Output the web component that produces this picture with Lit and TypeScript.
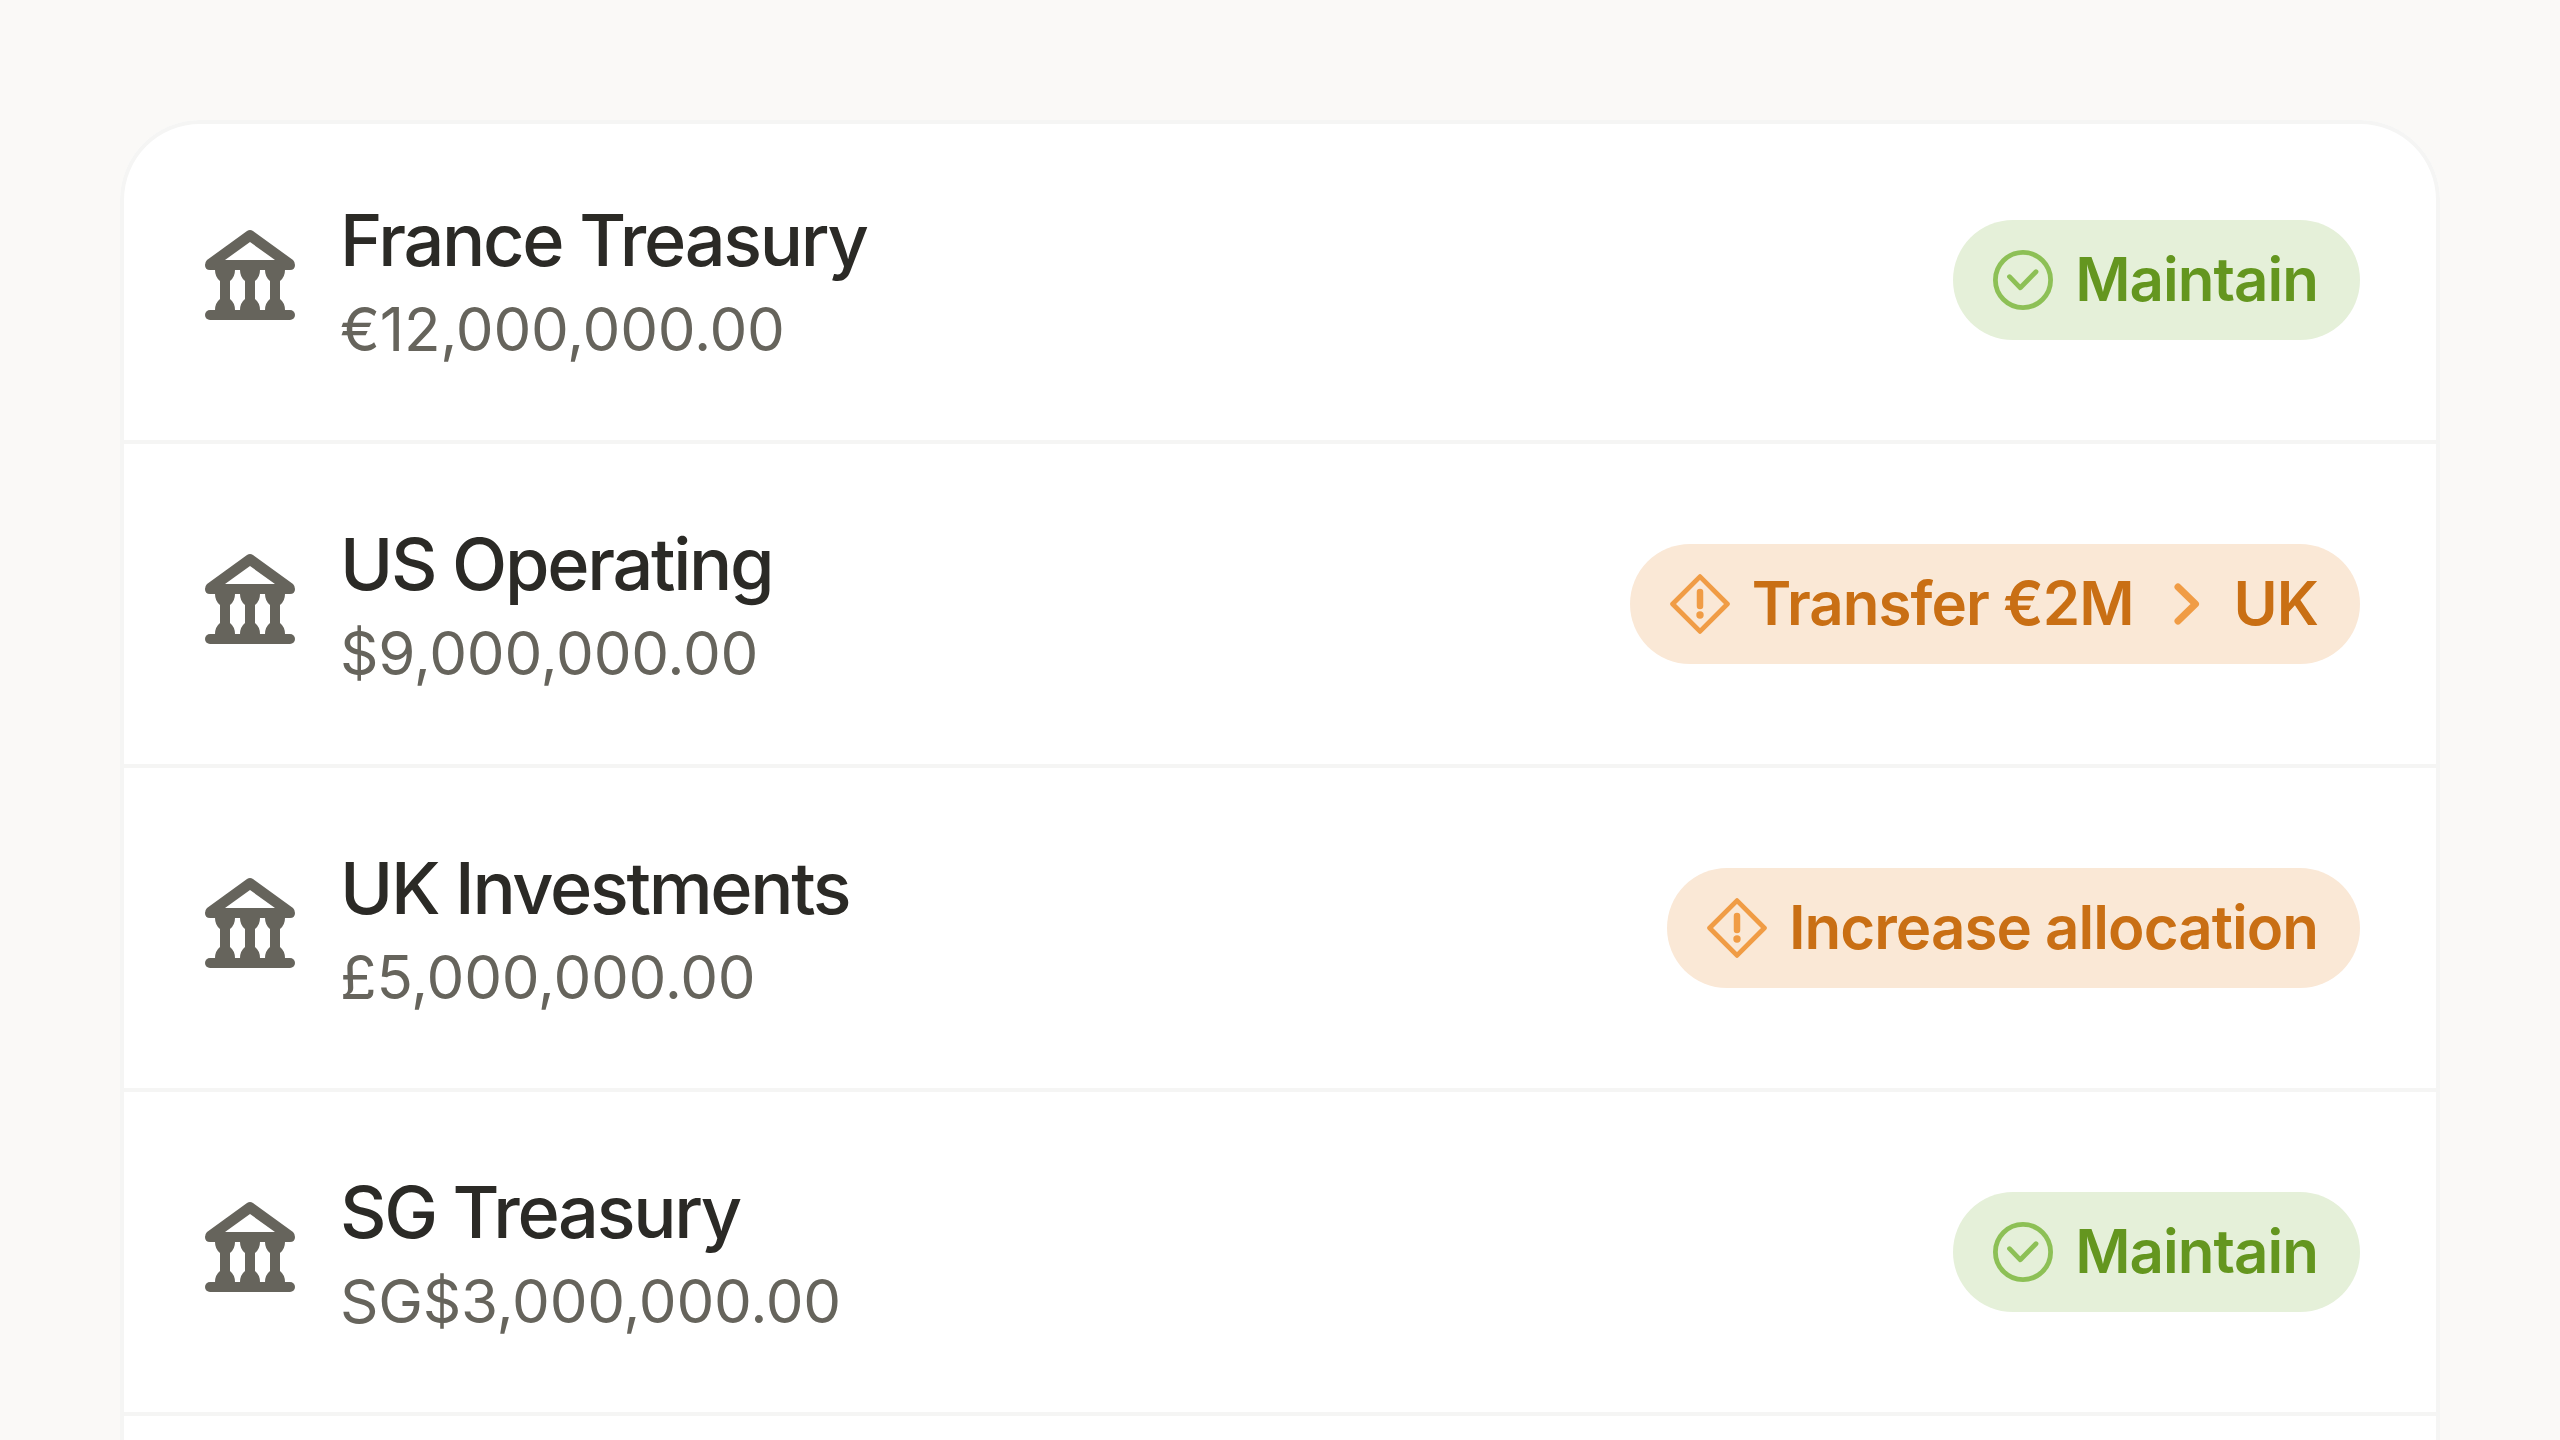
import { LitElement, html, css, svg } from 'lit';
import { customElement } from 'lit/decorators.js';

type Tone = 'ok' | 'warn';

interface Account {
    name: string;
    amount: string;
    tone: Tone;
    action: string;
    target?: string;
}

const ACCOUNTS: Account[] = [
    { name: 'France Treasury', amount: '€12,000,000.00', tone: 'ok', action: 'Maintain' },
    { name: 'US Operating', amount: '$9,000,000.00', tone: 'warn', action: 'Transfer €2M', target: 'UK' },
    { name: 'UK Investments', amount: '£5,000,000.00', tone: 'warn', action: 'Increase allocation' },
    { name: 'SG Treasury', amount: 'SG$3,000,000.00', tone: 'ok', action: 'Maintain' },
];

const column = (c: number) =>
    `M${c - 10} 40Q${c - 10} 47 ${c - 5} 51V69Q${c - 10} 73 ${c - 10} 80H${c + 10}Q${c + 10} 73 ${c + 5} 69V51Q${c + 10} 47 ${c + 10} 40Z`;

const bankIcon = html`
    <svg class="bank" viewBox="0 0 100 100">
        <path fill-rule="evenodd" d="M47 1Q50 -1 53 1L93 30Q95 32 95 35Q95 40 90 40H10Q5 40 5 35Q5 32 7 30ZM50 12L25 30H75Z"></path>
        <path d="${column(25)}"></path>
        <path d="${column(50)}"></path>
        <path d="${column(75)}"></path>
        <rect x="5" y="80" width="90" height="10" rx="5"></rect>
    </svg>
`;

const checkIcon = html`
    <svg class="glyph lead" viewBox="0 0 60 60">
        ${svg`<circle cx="30" cy="30" r="27.6"></circle>
        <polyline points="16.5,26.7 27.3,37.8 43,21.7"></polyline>`}
    </svg>
`;

const alertIcon = html`
    <svg class="glyph lead" viewBox="0 0 60 60">
        ${svg`<path d="M30 2.6L57.4 30L30 57.4L2.6 30Z"></path>
        <line class="mark" x1="30" y1="18" x2="30" y2="32"></line>
        <circle class="dot" cx="30" cy="41" r="3.7"></circle>`}
    </svg>
`;

const chevronIcon = html`
    <svg class="glyph chevron" viewBox="0 0 60 60">
        ${svg`<polyline points="24,13 41.5,30 24,47"></polyline>`}
    </svg>
`;

@customElement('app-root')
export class AppRoot extends LitElement {
    static styles = css`
        :host {
            display: block;
            height: 1440px;
            box-sizing: border-box;
            padding: 120px 120px 0;
            overflow: hidden;
            background: #faf9f7;
            font-family: Inter, 'Liberation Sans', sans-serif;
        }

        .card {
            background: #fff;
            border-radius: 80px 80px 0 0;
            box-shadow: inset 0 0 0 4px #f5f5f4;
            height: 1400px;
        }

        .row {
            display: flex;
            align-items: center;
            height: 320px;
            padding: 0 80px;
            border-bottom: 4px solid #f5f5f4;
        }

        .bank {
            flex: none;
            width: 100px;
            height: 100px;
            fill: #66645c;
            overflow: visible;
            margin-right: 40px;
        }

        .text {
            flex: 1;
        }

        .name {
            font-size: 72px;
            line-height: 98px;
            font-weight: 450;
            letter-spacing: -0.032em;
            color: #2b2a26;
        }

        .amount {
            font-size: 60px;
            line-height: 80px;
            font-weight: 440;
            letter-spacing: -0.004em;
            color: #66645c;
        }

        .pill {
            display: flex;
            align-items: center;
            gap: 20px;
            height: 120px;
            padding: 0 42px 0 40px;
            border-radius: 60px;
            font-size: 60px;
            font-weight: 570;
            letter-spacing: -0.016em;
            white-space: nowrap;
        }

        .pill span {
            margin-bottom: 3px;
        }

        .pill.ok {
            background: #e5f0d9;
            color: #64961f;
            --icon: #8dc056;
        }

        .pill.warn {
            background: #fae8d6;
            color: #c96f14;
            --icon: #f09c45;
        }

        .glyph {
            flex: none;
            width: 60px;
            height: 60px;
            fill: none;
            stroke: var(--icon);
            stroke-width: 4.8;
            stroke-linecap: round;
            stroke-linejoin: round;
        }

        .glyph.lead {
            margin-right: 2px;
        }

        .glyph .mark {
            stroke-width: 6.5;
        }

        .glyph .dot {
            fill: var(--icon);
            stroke: none;
        }

        .chevron {
            stroke-width: 7;
        }
    `;

    render() {
        return html`
            <div class="card">
                ${ACCOUNTS.map(a => html`
                    <div class="row">
                        ${bankIcon}
                        <div class="text">
                            <div class="name">${a.name}</div>
                            <div class="amount">${a.amount}</div>
                        </div>
                        <div class="pill ${a.tone}">
                            ${a.tone === 'ok' ? checkIcon : alertIcon}
                            <span>${a.action}</span>
                            ${a.target ? html`${chevronIcon}<span>${a.target}</span>` : ''}
                        </div>
                    </div>
                `)}
            </div>
        `;
    }
}
